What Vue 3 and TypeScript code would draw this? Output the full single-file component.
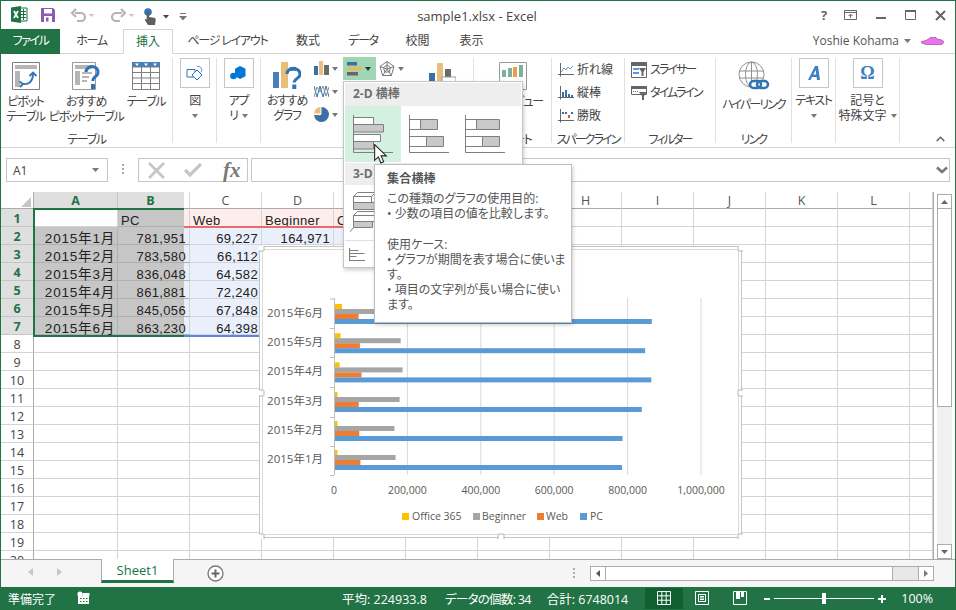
<script setup lang="ts">
const tabs = [
  { label: 'ホーム', w: 63, kana: true },
  { label: '挿入', w: 50, active: true },
  { label: 'ページ レイアウト', w: 109, kana: true },
  { label: '数式', w: 52 },
  { label: 'データ', w: 58, kana: true },
  { label: '校閲', w: 51 },
  { label: '表示', w: 57 },
]
const letters = ['A', 'B', 'C', 'D', 'E', 'F', 'G', 'H', 'I', 'J', 'K', 'L', '']
const rowsData: Record<number, string[]> = {
  1: ['', 'PC', 'Web', 'Beginner', 'O'],
  2: ['2015年1月', '781,951', '69,227', '164,971'],
  3: ['2015年2月', '783,580', '66,112'],
  4: ['2015年3月', '836,048', '64,582'],
  5: ['2015年4月', '861,881', '72,240'],
  6: ['2015年5月', '845,056', '67,848'],
  7: ['2015年6月', '863,230', '64,398'],
}
const rowNums = Array.from({ length: 20 }, (_, i) => i + 1)
function cellText(r: number, c: number): string {
  return rowsData[r]?.[c] ?? ''
}
function cellClass(r: number, c: number): string[] {
  const out: string[] = []
  if (r === 1) out.push('left')
  if (r <= 7 && c === 0 && r > 1) out.push('sel', 'date')
  if (r === 1 && c === 1) out.push('sel-b-pink')
  if (r > 1 && r <= 7 && c === 1) out.push('sel-b-blue')
  if (r === 1 && c >= 2 && c <= 4) out.push('pink')
  if (r > 1 && r <= 7 && c === 2) out.push('blue')
  if (r === 2 && c >= 3 && c <= 4) out.push('blue')
  return out
}
const sheetCols = letters.map((_, i) => i)

// chart geometry, in page pixels
const px = (v: number) => v * 0.000367
const cats = [
  { label: '2015年6月', y: 304, o: 7, b: 180000, w: 64398, p: 863230 },
  { label: '2015年5月', y: 333.2, o: 5.5, b: 179000, w: 67848, p: 845056 },
  { label: '2015年4月', y: 362.4, o: 4.7, b: 184000, w: 72240, p: 861881 },
  { label: '2015年3月', y: 392, o: 2.5, b: 176000, w: 64582, p: 836048 },
  { label: '2015年2月', y: 421, o: 2.5, b: 162000, w: 66112, p: 783580 },
  { label: '2015年1月', y: 450, o: 2.5, b: 164971, w: 69227, p: 781951 },
]
const gridX = [
  { x: 407.4, t: '200,000' },
  { x: 480.8, t: '400,000' },
  { x: 554.2, t: '600,000' },
  { x: 627.6, t: '800,000' },
  { x: 701, t: '1,000,000' },
]
const ticks = [298.5, 328, 357, 387, 417, 446, 475]
const handles = [
  [261, 248], [501, 248], [741, 248],
  [261, 393], [741, 393],
  [261, 537], [501, 537], [741, 537],
]
const legend = [
  { x: 402, c: '#ffc000', t: 'Office 365', tx: 412 },
  { x: 473, c: '#a5a5a5', t: 'Beginner', tx: 482 },
  { x: 537, c: '#ed7d31', t: 'Web', tx: 546 },
  { x: 580, c: '#5b9bd5', t: 'PC', tx: 590 },
]
</script>

<template>
  <div class="win">
    <!-- title bar -->
    <div class="titlebar">
      <div class="qat">
        <svg class="q-excel" width="17" height="17" viewBox="0 0 17 17">
          <path d="M9 2h7v13H9z" fill="#fff" stroke="#217346" />
          <path d="M10 5.5h5M10 8.5h5M10 11.5h5M12.5 3v11" stroke="#217346" />
          <path d="M0 1.5 10 0v17L0 15.5z" fill="#217346" />
          <path d="M3 5l4 7M7 5l-4 7" stroke="#fff" stroke-width="1.7" />
        </svg>
        <svg class="q-save" width="14" height="14" viewBox="0 0 14 14">
          <path d="M0 0h12l2 2v12H0z" fill="#8a5bb5" />
          <path d="M3 1h8v4.500H3z" fill="#fff" />
          <path d="M3 8h8v6H3z" fill="#fff" />
          <path d="M5 9.500h2.500v4H5z" fill="#8a5bb5" />
        </svg>
        <svg class="q-undo" width="24" height="14" viewBox="0 0 24 14">
          <path d="M5 5h6a3.600 3.600 0 0 1 0 8H7M6 1 2 5l4 4" fill="none" stroke="#b5b5b5" stroke-width="2.200" />
          <path d="M19 6h5l-2.500 3z" fill="#c4c4c4" />
        </svg>
        <svg class="q-redo" width="24" height="14" viewBox="0 0 24 14">
          <path d="M12 5H6a3.600 3.600 0 0 0 0 8h4M11 1l4 4-4 4" fill="none" stroke="#b5b5b5" stroke-width="2.200" />
          <path d="M19 6h5l-2.500 3z" fill="#c4c4c4" />
        </svg>
        <svg class="q-touch" width="26" height="17" viewBox="0 0 26 17">
          <circle cx="5" cy="4" r="3.800" fill="#2f75b5" />
          <path d="M3.700 4h2.400v5l5 .8c1.300.2 1.600 1 1.600 2L12 17H5L1.500 11.500 3.700 11z" fill="#5f5f5f" />
          <path d="M20 7h6l-3 3.400z" fill="#444" />
        </svg>
        <svg class="q-cust" width="8" height="9" viewBox="0 0 8 9">
          <path d="M1 1.500h6" stroke="#777" />
          <path d="M0 4h8L4 8.500z" fill="#777" />
        </svg>
      </div>
      <div class="doc-title">sample1.xlsx - Excel</div>
      <div class="winbtns">
        <span class="help">?</span>
        <svg width="13" height="10" viewBox="0 0 13 10" class="wb-ribbon">
          <path d="M.5.500h12v9H.500zM.5 2.500h12" fill="none" stroke="#666" />
          <path d="M6.500 8V4.500M4.500 6l2-2 2 2" fill="none" stroke="#666" />
        </svg>
        <svg width="10" height="3" viewBox="0 0 10 3" class="wb-min"><path d="M0 0h10v2H0z" fill="#666" /></svg>
        <svg width="11" height="10" viewBox="0 0 11 10" class="wb-max"><path d="M.5 1.500h10v8H.500z" fill="none" stroke="#666" /><path d="M0 0h11v2H0z" fill="#666" /></svg>
        <svg width="11" height="11" viewBox="0 0 11 11" class="wb-close"><path d="M1 1l9 9M10 1l-9 9" stroke="#666" stroke-width="2" /></svg>
      </div>
    </div>

    <!-- tabs -->
    <div class="tabbar">
      <div class="file-tab">ファイル</div>
      <div
        v-for="t in tabs"
        :key="t.label"
        class="tab"
        :class="{ active: t.active, kana: t.kana }"
        :style="{ width: t.w + 'px' }"
      >{{ t.label }}</div>
      <div class="account">
        <span class="acc-name">Yoshie Kohama</span>
        <svg width="7" height="4" viewBox="0 0 7 4" class="acc-caret"><path d="M0 0h7L3.500 4z" fill="#777" /></svg>
        <svg width="23" height="9" viewBox="0 0 23 9" class="acc-car">
          <path d="M.5 4.500 5 3.500l2-1.500h1l1-1.500h6l1 1.500 5 1 2 2-2 2.500H5L.5 6z" fill="#f26ff0" stroke="#5a3a5a" stroke-width=".5" />
        </svg>
      </div>
    </div>

    <!-- ribbon -->
    <div class="ribbon">
      <section class="group g-table">
        <div class="group-body">
          <div class="btn b-pivot">
            <svg width="28" height="28" viewBox="0 0 28 28">
              <path d="M.5.500h27v27H.500z" fill="#fff" stroke="#7f7f7f" />
              <path d="M3 3h22v4H3zM3 9h5v16H3z" fill="#b5b5b5" />
              <path d="M11 22c6 1 10-3 10-10M7.500 19.500l3.500 2.500-3 3M17.500 14l3.500-3.500 3.500 3.500" fill="none" stroke="#2f75b5" stroke-width="1.800" />
            </svg>
            <span>ピボット<br />テーブル</span>
          </div>
          <div class="btn b-rec">
            <svg width="28" height="28" viewBox="0 0 28 28">
              <path d="M.5.500h23v27H.500z" fill="#fff" stroke="#9a9a9a" />
              <path d="M3 3h17v4H3zM3 9h5v14H3zM10 10h10v2H10zM10 14h7v2h-7zM10 18h5v2h-5z" fill="#b5b5b5" />
              <path d="M14 10a6 5.500 0 1 1 9.500 4.500c-2 1.500-2.700 2-2.700 4.500" fill="none" stroke="#2f75b5" stroke-width="3" />
              <path d="M19 22h4v5h-4z" fill="#2f75b5" />
            </svg>
            <span>おすすめ<br />ピボットテーブル</span>
          </div>
          <div class="btn b-tbl">
            <svg width="28" height="28" viewBox="0 0 28 28">
              <path d="M0 0h28v5H0z" fill="#4a7ebb" />
              <path d="M.5 5h27v22.500H.500zM.5 10.500h27M.5 16h27M.5 21.500h27M9.500 5v22.500M18.500 5v22.500" fill="#fff" stroke="#7f7f7f" />
              <path d="M3 1.500h4L5 4zM12 1.500h4L14 4zM21 1.500h4L23 4z" fill="#fff" />
            </svg>
            <span>テーブル</span>
          </div>
        </div>
        <div class="group-label">テーブル</div>
      </section>

      <section class="group g-fig">
        <div class="group-body">
          <div class="btn boxed">
            <div class="box">
              <svg width="18" height="16" viewBox="0 0 18 16">
                <path d="M1 4.500h8v7.500H1z" fill="none" stroke="#2f75b5" />
                <path d="M11 1.500a3.800 3.800 0 0 1 4 6" fill="none" stroke="#5b9bd5" />
                <path d="M6 10l5-5 5 5-5 5z" fill="#fff" stroke="#2f75b5" />
              </svg>
            </div>
            <span class="lbl">図</span>
            <i class="caret" />
          </div>
        </div>
      </section>

      <section class="group g-fig">
        <div class="group-body">
          <div class="btn boxed">
            <div class="box">
              <svg width="18" height="16" viewBox="0 0 18 16">
                <path d="M10 1l5.500 2.800v7.500L10 14l-5-2.700V3.800z" fill="#0078d7" />
                <circle cx="3.500" cy="11" r="3.300" fill="#0078d7" />
              </svg>
            </div>
            <span class="lbl">アプ<br />リ<i class="caret inl" /></span>
          </div>
        </div>
      </section>

      <section class="group g-chart">
        <div class="group-body">
          <div class="btn b-recc">
            <svg width="28" height="27" viewBox="0 0 28 27">
              <path d="M0 10h6v16H0z" fill="#4a7ebb" />
              <path d="M8 0h7v26H8z" fill="#e8bf7a" />
              <path d="M17 5h6v4h-6z" fill="#7f7f7f" />
              <path d="M14 12a6.500 5.500 0 1 1 10 4.500c-2 1.500-2.800 2-2.800 4" fill="none" stroke="#2f75b5" stroke-width="3" />
              <path d="M19.300 22.500h4V27h-4z" fill="#2f75b5" />
            </svg>
            <span>おすすめ<br />グラフ</span>
          </div>
          <div class="mini-col">
            <div class="mini">
              <svg width="15" height="15" viewBox="0 0 15 15"><path d="M0 5h4v9H0z" fill="#3a6fa8" /><path d="M5 0h4v14H5z" fill="#e8bf7a" /><path d="M10 4h5v10h-5z" fill="#6a6a6a" /></svg>
              <i class="caret" />
            </div>
            <div class="mini">
              <svg width="15" height="15" viewBox="0 0 15 15"><path d="M0 2l3 11 3-11 3 11 3-11 3 11" fill="none" stroke="#2f75b5" /><path d="M0 13l3-10 3 5 3-6 3 10 3-9" fill="none" stroke="#8a8a8a" /></svg>
              <i class="caret" />
            </div>
            <div class="mini">
              <svg width="15" height="15" viewBox="0 0 15 15"><path d="M7.500 7.500V0a7.500 7.500 0 0 1 0 15A7.500 7.500 0 0 1 .7 10.500z" fill="#3a6fa8" /><path d="M6.500 6.500V0A7 7 0 0 0 0 6.500z" fill="#e8bf7a" /><path d="M0 8h6L1 11z" fill="#666" /></svg>
              <i class="caret" />
            </div>
          </div>
          <div class="mini-col">
            <div class="mini mini-on">
              <svg width="15" height="14" viewBox="0 0 15 14"><path d="M0 0h10v3.500H0z" fill="#3a6fa8" /><path d="M0 5h15v3.500H0z" fill="#e8b860" /><path d="M0 10h11v3.500H0z" fill="#666" /></svg>
              <i class="caret dark" />
            </div>
          </div>
          <div class="mini-col">
            <div class="mini m-radar">
              <svg width="16" height="16" viewBox="0 0 16 16"><path d="M8 .5l7 5-2.700 9H3.700L1 5.500zM8 4l3.500 2.500-1.300 4.500H5.800L4.500 6.500zM8 .5V8M15 5.500 8 8M12.300 14.500 8 8M3.700 14.500 8 8M1 5.500 8 8" fill="none" stroke="#777" /></svg>
              <i class="caret" />
            </div>
          </div>
          <div class="btn b-pc">
            <svg width="28" height="27" viewBox="0 0 28 27">
              <path d="M1 10h6v17H1z" fill="#3a6fa8" /><path d="M9 0h6v27H9z" fill="#e8bf7a" /><path d="M17 6h6v21h-6z" fill="#6a6a6a" />
              <path d="M14 14h14v13H14z" fill="#fff" stroke="#999" />
            </svg>
          </div>
        </div>
      </section>

      <section class="group g-power">
        <div class="group-body">
          <div class="btn b-power">
            <svg width="28" height="28" viewBox="0 0 28 28">
              <path d="M.5.500h27v27H.500z" fill="#fff" stroke="#9a9a9a" />
              <path d="M3 8h4v7H3zM9 6h4v9H9z" fill="#7fb09a" /><path d="M14 5h4v10h-4z" fill="#ed9c4a" /><path d="M20 3h4v12h-4z" fill="#7fb09a" />
            </svg>
            <span class="one">パワー ビュー</span>
          </div>
        </div>
        <div class="group-label">レポート</div>
      </section>

      <section class="group g-spark">
        <div class="group-body col">
          <div class="row-btn full">
            <svg width="16" height="14" viewBox="0 0 16 14"><path d="M2.500 0v13.500M0 11.500h16" stroke="#666" /><path d="M3 9l3-4 2 2 2-3 2 2 3-3" fill="none" stroke="#5b9bd5" /></svg>
            <span>折れ線</span>
          </div>
          <div class="row-btn full">
            <svg width="16" height="14" viewBox="0 0 16 14"><path d="M2.500 0v13.500M0 11.500h16" stroke="#666" /><path d="M4 6h2v5H4zM7 4h2v7H7zM10 8h2v3h-2zM13 9h2v2h-2z" fill="#3a6fa8" /></svg>
            <span>縦棒</span>
          </div>
          <div class="row-btn full">
            <svg width="16" height="14" viewBox="0 0 16 14"><path d="M2.500 0v13.500M0 11.500h16" stroke="#666" /><path d="M4 3h2v2H4zM7 3h2v2H7zM13 3h2v2h-2z" fill="#3a6fa8" /><path d="M10 6h2v3h-2z" fill="#d9541e" /></svg>
            <span>勝敗</span>
          </div>
        </div>
        <div class="group-label tight">スパークライン</div>
      </section>

      <section class="group g-filter">
        <div class="group-body col">
          <div class="row-btn tight">
            <svg width="16" height="16" viewBox="0 0 16 16"><path d="M.5.500h15v15H.500z" fill="#fff" stroke="#666" /><path d="M0 0h16v4H0z" fill="#666" /><path d="M2 6h6v2H2zM2 10h6v2H2z" fill="#5b9bd5" /><path d="M8 6h7l-2.500 4v4h-2v-4z" fill="#666" /></svg>
            <span>スライサー</span>
          </div>
          <div class="row-btn tight">
            <svg width="16" height="14" viewBox="0 0 16 14"><path d="M.5.500h15v8H.500z" fill="#fff" stroke="#666" /><path d="M0 0h16v3H0z" fill="#666" /><path d="M2 5h1v1H2zM4 5h1v1H4zM6 5h1v1H6z" fill="#3a6fa8" /><path d="M8 6h8l-3 4v4h-2v-4z" fill="#666" /></svg>
            <span>タイムライン</span>
          </div>
        </div>
        <div class="group-label tight">フィルター</div>
      </section>

      <section class="group g-link">
        <div class="group-body">
          <div class="btn b-link tight">
            <svg width="32" height="32" viewBox="0 0 32 32">
              <g fill="none" stroke="#909090">
                <circle cx="13.500" cy="13.500" r="12.500" />
                <ellipse cx="13.500" cy="13.500" rx="6" ry="12.500" />
                <path d="M13.500 1v25M1.500 10h24M1.500 17h24" />
              </g>
              <rect x="12" y="20" width="11" height="7" rx="3.500" fill="#fff" stroke="#2f75b5" stroke-width="2.500" />
              <rect x="19" y="20" width="11" height="7" rx="3.500" fill="none" stroke="#2f75b5" stroke-width="2.500" />
            </svg>
            <span>ハイパーリンク</span>
          </div>
        </div>
        <div class="group-label tight">リンク</div>
      </section>

      <section class="group g-text">
        <div class="group-body">
          <div class="btn boxed">
            <div class="box">
              <svg width="12" height="14" viewBox="0 0 12 14"><path d="M7 0h3l2 14H9l-.4-3H4l-1.500 3H0zM7.800 4 5.200 8.500h3z" fill="#3f7fc4" /></svg>
            </div>
            <span class="lbl">テキスト</span>
            <i class="caret" />
          </div>
        </div>
      </section>

      <section class="group g-sym">
        <div class="group-body">
          <div class="btn boxed full">
            <div class="box">
              <span class="omega">Ω</span>
            </div>
            <span class="lbl">記号と<br />特殊文字<i class="caret inl" /></span>
          </div>
        </div>
      </section>

      <svg class="collapse" width="9" height="6" viewBox="0 0 9 6"><path d="M.7 5 4.500 1.300 8.300 5" fill="none" stroke="#666" stroke-width="1.600" /></svg>
    </div>

    <!-- formula bar -->
    <div class="fbar">
      <div class="namebox">
        <span>A1</span>
        <svg width="7" height="4" viewBox="0 0 7 4"><path d="M0 0h7L3.500 4z" fill="#777" /></svg>
      </div>
      <div class="fdots"><i /><i /><i /></div>
      <div class="fbtns">
        <svg width="17" height="17" viewBox="0 0 17 17"><path d="M1 1l15 15M16 1 1 16" stroke="#c6c6c6" stroke-width="2.800" /></svg>
        <svg width="18" height="14" viewBox="0 0 18 14"><path d="M1 7l5 5L17 1" fill="none" stroke="#c6c6c6" stroke-width="3.200" /></svg>
        <span class="fx">fx</span>
      </div>
      <div class="finput">
        <svg width="12" height="8" viewBox="0 0 12 8"><path d="M1 1.500l5 4.500 5-4.500" fill="none" stroke="#777" stroke-width="2.600" /></svg>
      </div>
    </div>

    <!-- sheet -->
    <div class="sheet-area">
      <div class="sheet">
        <div class="corner hcell">
          <svg width="10" height="10" viewBox="0 0 10 10"><path d="M10 0v10H0z" fill="#c6c6c6" /></svg>
        </div>
        <div
          v-for="(l, i) in letters"
          :key="'h' + i"
          class="hcell"
          :class="{ 'h-a': i === 0, 'h-b': i === 1 }"
        >{{ l }}</div>
        <template v-for="r in rowNums" :key="r">
          <div class="rowh" :class="{ 'rowh-sel': r <= 7 }">{{ r }}</div>
          <div
            v-for="c in sheetCols"
            :key="c"
            class="cell"
            :class="cellClass(r, c)"
          >{{ cellText(r, c) }}</div>
        </template>
      </div>

      <div class="vscroll">
        <div class="varrow">
          <svg width="7" height="4" viewBox="0 0 7 4"><path d="M0 4h7L3.500 0z" fill="#666" /></svg>
        </div>
        <div class="vthumb" />
        <div class="vtrack" />
        <div class="varrow">
          <svg width="7" height="4" viewBox="0 0 7 4"><path d="M0 0h7L3.500 4z" fill="#666" /></svg>
        </div>
      </div>

      <div class="selection" />
      <div class="range-red" />
      <div class="range-blue" />

      <!-- chart -->
      <svg class="chart" width="484" height="293" viewBox="259 246 484 293">
        <path d="M259.500 246.500h482v291h-482z" fill="#fff" stroke="#c4c4c4" />
        <path d="M262.500 249.500h476v285h-476z" fill="#fff" stroke="#d9d9d9" />
        <path v-for="g in gridX" :key="g.x" :d="`M${g.x} 298v177`" stroke="#d9d9d9" />
        <path d="M334.500 298v177" stroke="#bfbfbf" />
        <path v-for="t in ticks" :key="t" :d="`M330 ${t + 0.5}h4`" stroke="#bfbfbf" />
        <g v-for="c in cats" :key="c.label">
          <rect x="335" :y="c.y" :width="c.o" height="5" fill="#ffc000" />
          <rect x="335" :y="c.y + 5" :width="px(c.b)" height="5" fill="#a5a5a5" />
          <rect x="335" :y="c.y + 10" :width="px(c.w)" height="5" fill="#ed7d31" />
          <rect x="335" :y="c.y + 15" :width="px(c.p)" height="5" fill="#5b9bd5" />
          <text x="323" :y="c.y + 13" text-anchor="end" class="ct cl">{{ c.label }}</text>
        </g>
        <text x="334" y="494" text-anchor="middle" class="ct">0</text>
        <text v-for="g in gridX" :key="g.t" :x="g.x" y="494" text-anchor="middle" class="ct">{{ g.t }}</text>
        <g v-for="l in legend" :key="l.t">
          <rect :x="l.x" y="513" width="7" height="7" :fill="l.c" />
          <text :x="l.tx" y="520" class="ct">{{ l.t }}</text>
        </g>
        <rect v-for="h in handles" :key="h.join()" :x="h[0] - 3" :y="h[1] - 3" width="6" height="6" rx="1" fill="#fff" stroke="#b5b5b5" />
      </svg>
    </div>

    <!-- sheet tabs -->
    <div class="tabsrow">
      <div class="nav">
        <svg width="5" height="8" viewBox="0 0 5 8"><path d="M5 0v8L0 4z" fill="#c6c6c6" /></svg>
        <svg width="5" height="8" viewBox="0 0 5 8"><path d="M0 0v8l5-4z" fill="#c6c6c6" /></svg>
      </div>
      <div class="sheet-tab">Sheet1</div>
      <svg class="addsheet" width="17" height="17" viewBox="0 0 17 17">
        <circle cx="8.500" cy="8.500" r="7.500" fill="#fff" stroke="#777" stroke-width="1.300" />
        <path d="M8.500 4.500v8M4.500 8.500h8" stroke="#666" stroke-width="2" />
      </svg>
      <div class="sdots"><i /><i /><i /></div>
      <div class="hscroll">
        <div class="harrow"><svg width="4" height="7" viewBox="0 0 4 7"><path d="M4 0v7L0 3.500z" fill="#555" /></svg></div>
        <div class="hthumb" />
        <div class="htrack" />
        <div class="harrow r"><svg width="4" height="7" viewBox="0 0 4 7"><path d="M0 0v7l4-3.500z" fill="#777" /></svg></div>
      </div>
    </div>

    <!-- status -->
    <div class="status">
      <span class="st-ready">準備完了</span>
      <svg class="st-mac" width="13" height="13" viewBox="0 0 13 13">
        <circle cx="3" cy="3" r="2.600" fill="#fff" />
        <path d="M1 5h11v8H1z" fill="#fff" />
        <path d="M5.500 2h7v3h-7z" fill="#fff" />
        <path d="M3 7h1.500v1H3zM6 7h1.500v1H6zM9 7h1.500v1H9zM3 10h1.500v1H3zM6 10h1.500v1H6zM9 10h1.500v1H9z" fill="#217346" />
      </svg>
      <span class="st-s1">平均: 224933.8</span>
      <span class="st-s2">データの個数: 34</span>
      <span class="st-s3">合計: 6748014</span>
      <div class="views">
        <div class="view on">
          <svg width="14" height="14" viewBox="0 0 14 14"><path d="M.5.500h13v13H.500zM.5 4.800h13M.5 9.200h13M4.800.5v13M9.200.5v13" fill="none" stroke="#fff" /></svg>
        </div>
        <div class="view">
          <svg width="14" height="14" viewBox="0 0 14 14"><path d="M.5.500h13v13H.500zM3.500 3.500h7v7h-7zM5 5.500h4M5 7h4M5 8.500h4" fill="none" stroke="#fff" /></svg>
        </div>
        <div class="view">
          <svg width="14" height="14" viewBox="0 0 14 14"><path d="M.5.500h13v13H.500z" fill="none" stroke="#fff" /><path d="M3 0h4v8H3zM8 0h3v6H8z" fill="#fff" /></svg>
        </div>
      </div>
      <div class="zoom">
        <svg width="6" height="2" viewBox="0 0 6 2"><path d="M0 0h6v2H0z" fill="#fff" /></svg>
        <div class="slider"><i /></div>
        <svg width="8" height="8" viewBox="0 0 8 8"><path d="M3 0h2v8H3zM0 3h8v2H0z" fill="#fff" /></svg>
      </div>
      <span class="st-pct">100%</span>
    </div>

    <!-- gallery menu -->
    <div class="gallery">
      <div class="gal-head">2-D 横棒</div>
      <div class="gal-row">
        <div class="gal-cell on">
          <svg width="56" height="56" viewBox="345 105 56 56">
            <path d="M353.500 116.500h20v7h-20zM353.500 133.500h27v7h-27z" fill="#fff" stroke="#7f7f7f" />
            <path d="M353.500 123.500h30v7.500h-30zM353.500 140.500h20v7.500h-20z" fill="#c9c9c9" stroke="#7f7f7f" />
            <path d="M353.500 114v37.500H393" fill="none" stroke="#7f7f7f" />
          </svg>
        </div>
        <div class="gal-cell">
          <svg width="56" height="56" viewBox="401 105 56 56">
            <path d="M409.500 118.500h11v10h-11zM409.500 135.500h17v10h-17z" fill="#fff" stroke="#7f7f7f" />
            <path d="M420.500 118.500h17v10h-17zM426.500 135.500h17v10h-17z" fill="#c9c9c9" stroke="#7f7f7f" />
            <path d="M409.500 114v37.500H449" fill="none" stroke="#7f7f7f" />
          </svg>
        </div>
        <div class="gal-cell">
          <svg width="56" height="56" viewBox="457 105 56 56">
            <path d="M465.500 118.500h11v10h-11zM465.500 135.500h17v10h-17z" fill="#fff" stroke="#7f7f7f" />
            <path d="M476.500 118.500h23v10h-23zM482.500 135.500h17v10h-17z" fill="#c9c9c9" stroke="#7f7f7f" />
            <path d="M465.500 114v37.500H505" fill="none" stroke="#7f7f7f" />
          </svg>
        </div>
      </div>
      <div class="gal-head h3">3-D 横棒</div>
      <div class="gal-row3">
        <svg width="36" height="46" viewBox="0 0 36 46">
          <path d="M3.500 8.500l4-4h18l-4 4zM3.500 8.500h18v6h-18z" fill="#fff" stroke="#7f7f7f" />
          <path d="M3.500 14.500h26v7h-26z" fill="#c9c9c9" stroke="#7f7f7f" />
          <path d="M3.500 27.500l4-4h22l-4 4zM3.500 27.500h22v6h-22z" fill="#fff" stroke="#7f7f7f" />
          <path d="M3.500 33.500h19v6h-19z" fill="#c9c9c9" stroke="#7f7f7f" />
          <path d="M3.500 39.500l-4 5" stroke="#7f7f7f" />
        </svg>
      </div>
      <div class="gal-foot">
        <svg width="16" height="13" viewBox="0 0 16 13"><path d="M.5 0v13M.5 12.500H16M.5 2.500h9M.5 5.500h15M.5 8.500h7" fill="none" stroke="#7f7f7f" stroke-width="1.200" /></svg>
      </div>
    </div>

    <!-- tooltip -->
    <div class="tip">
      <div class="tip-title">集合横棒</div>
      <div class="tip-body">この種類のグラフの使用目的:<br />• 少数の項目の値を比較します。<br /><br />使用ケース:<br />• グラフが期間を表す場合に使いま<br />す。<br />• 項目の文字列が長い場合に使い<br />ます。</div>
    </div>

    <!-- cursor -->
    <svg class="cursor" width="15" height="20" viewBox="0 0 14 19">
      <path d="M.5.500v15l3.500-3.300 2.400 5.800 2.700-1.200-2.500-5.500h5z" fill="#fff" stroke="#222" />
    </svg>
  </div>
</template>

<style>
html, body { margin: 0; background: #fff; overflow: hidden; }
</style>

<style scoped>
.win {
  position: relative;
  width: 956px;
  height: 610px;
  box-sizing: border-box;
  border: 1px solid #217346;
  border-bottom: 0;
  display: flex;
  flex-direction: column;
  overflow: hidden;
  background: #fff;
  font-family: "Open Sans", "Noto Sans CJK JP", sans-serif;
  font-size: 12px;
  color: #444;
  font-feature-settings: "palt";
}
svg { display: block; flex: none; }
i { display: block; }

/* title */
.titlebar { height: 28px; display: flex; align-items: center; position: relative; flex: none; }
.qat { display: flex; align-items: center; padding-left: 10px; height: 100%; }
.q-excel { margin-top: -1px; }
.q-save { margin-left: 13px; }
.q-undo { margin-left: 15px; }
.q-redo { margin-left: 16px; }
.q-touch { margin-left: 9px; margin-top: 2px; }
.q-cust { margin-left: 10px; margin-top: 2px; }
.doc-title {
  position: absolute;
  left: 0;
  right: 0;
  top: 5px;
  text-align: center;
  font-size: 13px;
  line-height: 20px;
  padding-right: 2px;
}
.winbtns { margin-left: auto; display: flex; align-items: center; height: 100%; padding-right: 9px; color: #666; }
.help { font: bold 13px "Open Sans", sans-serif; width: 8px; margin-right: 15px; }
.wb-ribbon { margin-right: 19px; }
.wb-min { margin-right: 19px; margin-top: 6px; }
.wb-max { margin-right: 19px; }

/* tabs */
.tabbar {
  height: 25px;
  flex: none;
  display: flex;
  box-sizing: border-box;
  border-bottom: 1px solid #d4d4d4;
  line-height: 24px;
  font-size: 12px;
}
.file-tab { width: 59px; height: 25px; background: #217346; color: #fff; text-align: center; letter-spacing: -1.5px; }
.tab { text-align: center; color: #444; box-sizing: border-box; height: 25px; white-space: nowrap; }
.tab.kana { letter-spacing: -1.2px; }
.tab.active {
  color: #217346;
  background: #fff;
  border: 1px solid #d4d4d4;
  border-bottom: 0;
  position: relative;
  line-height: 23px;
}
.account { margin-left: auto; display: flex; align-items: center; height: 24px; padding-right: 11px; }
.acc-name { color: #555; font-size: 12px; }
.acc-caret { margin: 0 0 0 5px; }
.acc-car { margin-left: 10px; }

/* ribbon */
.ribbon {
  height: 94px;
  flex: none;
  box-sizing: border-box;
  border-bottom: 1px solid #d4d4d4;
  display: flex;
  align-items: flex-start;
  padding-top: 4px;
  position: relative;
  line-height: 15px;
  font-size: 12px;
  letter-spacing: -1.3px;
}
.tight { letter-spacing: -1.9px; }
.full { letter-spacing: 0; }
.group {
  height: 85px;
  box-sizing: border-box;
  border-right: 1px solid #e1e1e1;
  display: flex;
  flex-direction: column;
  flex: none;
}
.group-body { flex: 1; display: flex; min-height: 0; }
.group-body.col { flex-direction: column; }
.group-label { height: 16px; line-height: 25px; text-align: center; white-space: nowrap; overflow: visible; }
.g-table { width: 172px; }
.g-fig { width: 44px; }
.g-chart { width: 213px; }
.g-power { width: 78px; }
.g-spark { width: 73px; }
.g-filter { width: 91px; }
.g-link { width: 76px; }
.g-text { width: 44px; }
.g-sym { width: 64px; }

.btn { display: flex; flex-direction: column; align-items: center; text-align: center; padding-top: 4px; box-sizing: border-box; flex: none; white-space: nowrap; }
.btn > span { margin-top: 4px; }
.b-pivot { width: 49px; }
.b-rec { width: 72px; }
.b-tbl { width: 48px; }
.boxed { width: 43px; padding-top: 0; }
.g-sym .boxed { width: 63px; }
.box { width: 30px; height: 30px; box-sizing: border-box; border: 1px solid #c6c6c6; display: flex; align-items: center; justify-content: center; }
.boxed .lbl { margin-top: 5px; }
.caret { width: 0; height: 0; border: 3.5px solid transparent; border-top: 4px solid #777; border-bottom: 0; }
.caret.dark { border-top-color: #333; }
.caret.inl { display: inline-block; margin-left: 4px; vertical-align: 2px; }
.boxed > .caret { margin-top: 6px; }
.b-recc { width: 52px; }
.mini-col { display: flex; flex-direction: column; flex: none; margin-top: -1px; }
.mini { height: 23px; width: 30px; display: flex; align-items: center; box-sizing: border-box; padding-left: 1px; gap: 3px; }
.mini-on { width: 33px; background: #a0d6b4; padding-left: 4px; gap: 3px; }
.m-radar { width: 34px; padding-left: 3px; }
.b-pc { width: 63px; padding-top: 5px; }
.b-power { width: 77px; }
.one { margin-top: 4px; }

.row-btn { height: 23px; display: flex; align-items: center; padding-left: 6px; gap: 3px; white-space: nowrap; }
.b-link { width: 75px; padding-top: 3px; }
.omega { font: bold 18px "Liberation Serif", serif; color: #3f7fc4; letter-spacing: 0; }
.collapse { position: absolute; right: 10px; top: 82px; }

/* formula */
.fbar { height: 44px; flex: none; display: flex; align-items: flex-start; padding: 10px 5px 0; box-sizing: border-box; }
.namebox { width: 102px; height: 24px; box-sizing: border-box; border: 1px solid #c6c6c6; display: flex; align-items: center; justify-content: space-between; padding: 0 8px 0 6px; font: 12px "Open Sans", sans-serif; }
.fdots { width: 30px; display: flex; flex-direction: column; align-items: center; gap: 2px; padding-top: 6px; }
.fdots i { width: 2px; height: 2px; background: #aaa; }
.fbtns { width: 110px; height: 24px; box-sizing: border-box; border: 1px solid #c6c6c6; display: flex; align-items: center; padding-left: 9px; gap: 19px; }
.fx { font: italic bold 21px "Liberation Serif", serif; color: #777; margin-left: 2px; line-height: 22px; }
.finput { flex: 1; height: 24px; box-sizing: border-box; border: 1px solid #c6c6c6; margin-left: 3px; display: flex; align-items: center; justify-content: flex-end; padding-right: 1px; }

/* sheet */
.sheet-area { position: relative; height: 367px; flex: none; overflow: hidden; display: flex; align-items: flex-start; }
.sheet {
  display: grid;
  grid-template-columns: 33px 84px repeat(11, 72px) 23px;
  grid-template-rows: 17px repeat(20, 18px);
  width: 932px;
  height: 367px;
  overflow: hidden;
  border-right: 1px solid #ababab;
  box-sizing: content-box;
  font-family: "Liberation Sans", "Noto Sans CJK JP", sans-serif;
  font-feature-settings: normal;
  flex: none;
}
.hcell {
  box-sizing: border-box;
  border-right: 1px solid #d4d4d4;
  border-bottom: 1px solid #ababab;
  text-align: center;
  font: 12.5px/18px "Open Sans", sans-serif;
  color: #555;
}
.corner { display: flex; justify-content: flex-end; align-items: flex-end; padding: 0 2px 1px 0; border-right: 1px solid #ababab; }
.h-a { background: #dfdfdf; color: #217346; font-weight: 700; border-right-color: #c6c6c6; }
.h-b { background: linear-gradient(90deg, #dfdfdf 66px, #fff 66px); color: #217346; font-weight: 700; padding-right: 6px; }
.rowh {
  box-sizing: border-box;
  border-right: 1px solid #ababab;
  border-bottom: 1px solid #d4d4d4;
  text-align: center;
  font: 12.5px/20px "Open Sans", sans-serif;
  color: #444;
}
.rowh-sel { background: #dfdfdf; color: #217346; font-weight: 700; border-bottom-color: #c6c6c6; }
.cell {
  box-sizing: border-box;
  border-right: 1px solid #d4d4d4;
  border-bottom: 1px solid #d4d4d4;
  text-align: right;
  font-size: 13px;
  line-height: 23px;
  padding-right: 3px;
  color: #222;
  white-space: nowrap;
  letter-spacing: .35px;
  overflow: visible;
}
.cell.left { text-align: left; padding-left: 3px; }
.cell.date { font-size: 13.5px; letter-spacing: .8px; padding-right: 2px; }
.cell.sel { background: #c6c6c6; border-color: #b0b0b0; }
.cell.sel-b-pink { background: linear-gradient(90deg, #c6c6c6 66px, #fdeded 66px); border-bottom-color: #b0b0b0; }
.cell.sel-b-blue { background: linear-gradient(90deg, #c6c6c6 66px, #e9effb 66px); border-bottom-color: #b0b0b0; }
.cell.pink { background: #fdeded; }
.cell.blue { background: #e9effb; }

.vscroll {
  width: 15px;
  height: 365px;
  margin: 2px 0 0 3px;
  display: flex;
  flex-direction: column;
  flex: none;
  background: #f0f0f0;
}
.varrow { height: 15px; flex: none; box-sizing: border-box; border: 1px solid #ababab; background: #fff; display: flex; align-items: center; justify-content: center; }
.vthumb { height: 198px; flex: none; box-sizing: border-box; border: 1px solid #ababab; border-top: 0; background: #fff; }
.vtrack { flex: 1; }

.selection {
  position: absolute;
  left: 32px;
  top: 16px;
  width: 151px;
  height: 129px;
  box-sizing: border-box;
  border: 2px solid #217346;
  border-right: 0;
}
.range-red { position: absolute; left: 183px; top: 34px; width: 160px; height: 2px; background: #e86a6a; }
.range-blue { position: absolute; left: 183px; top: 143px; width: 76px; height: 2px; background: #5a86e0; }

.chart { position: absolute; left: 258px; top: 54px; }
.ct { font: 10.5px "Open Sans", "Noto Sans CJK JP", sans-serif; fill: #595959; }
.cl { font-size: 11.5px; }

/* gallery */
.gallery {
  position: absolute;
  left: 342px;
  top: 80px;
  width: 180px;
  height: 187px;
  box-sizing: border-box;
  background: #fff;
  border: 1px solid #c6c6c6;
  box-shadow: 1px 2px 4px rgba(0, 0, 0, .2);
  padding: 1px;
  letter-spacing: 0;
}
.gal-head { height: 23px; background: #eee; font-weight: 700; font-size: 12px; line-height: 22px; padding-left: 8px; color: #6e6e6e; font-feature-settings: normal; }
.gal-row { display: flex; height: 56px; }
.gal-cell { width: 56px; flex: none; }
.gal-cell.on { background: #d3f0e0; }
.gal-head.h3 { margin-top: 1px; height: 22px; }
.gal-row3 { height: 56px; padding: 3px 0 0 5px; box-sizing: border-box; border-bottom: 1px solid #e1e1e1; }
.gal-foot { padding: 7px 0 0 4px; }

/* tooltip */
.tip {
  position: absolute;
  left: 373px;
  top: 163px;
  width: 198px;
  height: 159px;
  box-sizing: border-box;
  background: #fff;
  border: 1px solid #bebebe;
  box-shadow: 1px 2px 4px rgba(0, 0, 0, .2);
  padding: 6px 0 0 12px;
  color: #555;
  font-size: 12px;
  white-space: nowrap;
}
.tip-title { font-weight: 700; line-height: 15px; letter-spacing: .2px; }
.tip-body { margin-top: 5px; line-height: 15.2px; }
.cursor { position: absolute; left: 373px; top: 143px; }

/* sheet tabs */
.tabsrow {
  height: 28px;
  flex: none;
  box-sizing: border-box;
  border-top: 1px solid #ababab;
  background: #f5f5f5;
  display: flex;
  align-items: flex-start;
}
.nav { width: 100px; display: flex; gap: 24px; padding: 8px 0 0 27px; box-sizing: border-box; }
.sheet-tab {
  width: 73px;
  height: 24px;
  margin-top: -1px;
  box-sizing: border-box;
  background: #fff;
  border: 1px solid #ababab;
  border-top: 0;
  border-bottom: 3px solid #217346;
  color: #217346;
  text-align: center;
  font-size: 13px;
  line-height: 22px;
  font-feature-settings: normal;
}
.addsheet { margin: 5px 0 0 33px; }
.sdots { display: flex; flex-direction: column; gap: 2px; margin: 8px 0 0 349px; }
.sdots i { width: 2px; height: 2px; background: #aaa; }
.hscroll { margin: 6px 0 0 15px; width: 344px; height: 15px; display: flex; box-sizing: border-box; border: 1px solid #ababab; background: #fff; }
.harrow { width: 14px; display: flex; align-items: center; justify-content: center; flex: none; }
.harrow.r { border-left: 1px solid #ababab; }
.hthumb { width: 286px; border: solid #ababab; border-width: 0 1px; flex: none; }
.htrack { flex: 1; background: #e8e8e8; }

/* status */
.status {
  height: 23px;
  flex: none;
  background: #217346;
  color: #fff;
  display: flex;
  align-items: center;
  position: relative;
  font-size: 12.5px;
  margin: 0 -1px;
}
.st-ready { margin-left: 8px; font-size: 12px; }
.st-mac { margin-left: 21px; margin-top: -2px; }
.st-s1 { margin-left: 252px; white-space: nowrap; }
.st-s2 { margin-left: 18px; white-space: nowrap; letter-spacing: -.7px; }
.st-s3 { margin-left: 16px; white-space: nowrap; }
.views { display: flex; margin-left: 17px; height: 21px; margin-top: -1px; }
.view { width: 38px; display: flex; align-items: center; justify-content: center; }
.view.on { background: #0f5f33; }
.zoom { display: flex; align-items: center; margin-left: 5px; }
.slider { width: 100px; height: 1px; background: #fff; margin: 0 4px; position: relative; }
.slider i { position: absolute; left: 48px; top: -5px; width: 4px; height: 11px; background: #fff; }
.st-pct { margin-left: 15px; }
</style>
